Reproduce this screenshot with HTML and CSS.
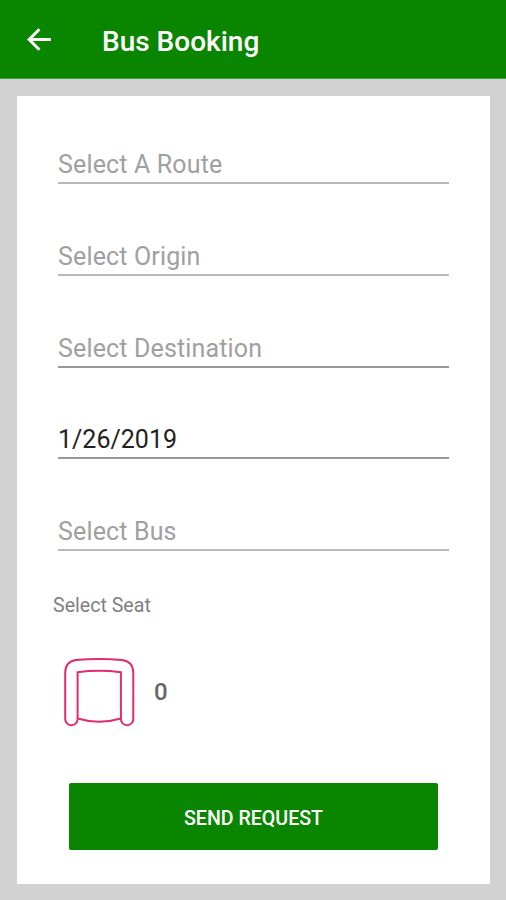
FILE: index.html
```html
<!DOCTYPE html>
<html lang="en">
<head>
<meta charset="utf-8">
<title>Bus Booking</title>
<link rel="stylesheet" href="styles.css">
</head>
<body>
<header class="app-bar">
  <svg class="back" width="26" height="26" viewBox="0 0 26 26" fill="none" stroke="#fff" stroke-width="3"><path d="M25 12.500H3.500M13.400 2.300 3.200 12.500l10.200 10.200"/></svg>
  <h1 class="title">Bus Booking</h1>
</header>
<main class="card">
  <div class="fields">
    <div class="field">Select A Route</div>
    <div class="field">Select Origin</div>
    <div class="field dark-line">Select Destination</div>
    <div class="field dark-line filled">1/26/2019</div>
    <div class="field">Select Bus</div>
  </div>
  <div class="seat-label">Select Seat</div>
  <div class="seat-row">
    <svg class="seat" width="74" height="72" viewBox="0 0 74 72" fill="none" stroke="#e02c70" stroke-width="2">
      <path d="M3.200 17Q3.200 5.500 14 4Q37 1.800 60 4Q71.300 5.500 71.300 17V63a6.200 6.200 0 0 1-12.400 0V16.200Q37 13.400 15.600 16.200V63a6.200 6.200 0 0 1-12.400 0Z"/>
      <path d="M15.600 62.500Q37 69 58.900 62.500"/>
    </svg>
    <span class="count">0</span>
  </div>
  <button class="send" type="button">SEND REQUEST</button>
</main>
</body>
</html>
```
FILE: styles.css
```css
* { box-sizing: border-box; }
body {
  margin: 0;
  height: 900px;
  overflow: hidden;
  background: #d2d2d2;
  font-family: Roboto, "Liberation Sans", sans-serif;
}
.app-bar {
  display: flex;
  align-items: center;
  height: 79px;
  padding: 2px 0 0 26px;
  background: #0a8500;
  border-bottom: 1px solid #429d3c;
}
.back { display: block; }
.title {
  margin: 3px 0 0 50px;
  color: #fff;
  font-size: 28px;
  font-weight: 500;
  line-height: 34px;
}
.card {
  height: 788px;
  margin: 17px 16px 0 17px;
  padding: 44px 41px 0;
  background: #fff;
}
.fields {
  display: flex;
  flex-direction: column;
  gap: 47.75px;
}
.field {
  height: 44px;
  padding-top: 9px;
  border-bottom: 2px solid #b9b9b9;
  color: #a0a0a0;
  font-size: 25px;
  font-weight: 400;
  letter-spacing: 0.15px;
  line-height: 32px;
}
.dark-line { border-bottom-color: #989898; }
.filled {
  color: #222;
  letter-spacing: 0;
}
.seat-label {
  margin: 43px 0 0 -5px;
  color: #808080;
  font-size: 19.6px;
  line-height: 24px;
}
.seat-row {
  display: flex;
  align-items: center;
  height: 72px;
  margin: 38px 0 0 4px;
}
.count {
  margin-left: 18px;
  color: #666;
  font-size: 24px;
  font-weight: 500;
}
.send {
  display: block;
  width: 369px;
  height: 67px;
  margin: 55px 0 0 11px;
  padding: 4px 0 0;
  border: 0;
  border-radius: 2px;
  background: #0a8500;
  color: #fff;
  font: 500 19.6px/24px Roboto, "Liberation Sans", sans-serif;
}
```
